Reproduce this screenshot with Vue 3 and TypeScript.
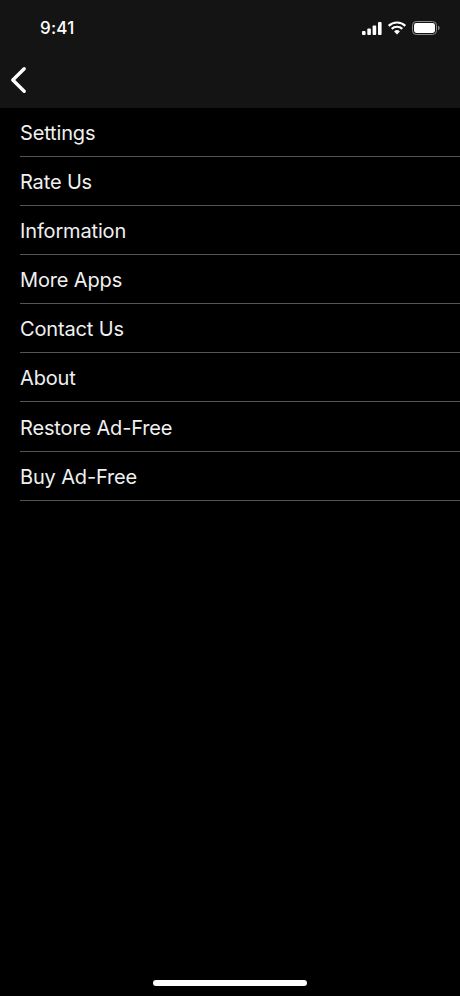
<script setup lang="ts">
const items: string[] = ['Settings', 'Rate Us', 'Information', 'More Apps', 'Contact Us', 'About', 'Restore Ad-Free', 'Buy Ad-Free']
</script>

<template>
  <div class="screen">
    <header class="header">
      <div class="status">
        <span class="time">9:41</span>
        <div class="indicators">
          <svg class="signal" width="20" height="13" viewBox="0 0 20 13">
            <rect x="0" y="9" width="3.6" height="4" rx="0.9" fill="#fff" />
            <rect x="5.3" y="6.5" width="3.6" height="6.5" rx="0.9" fill="#fff" />
            <rect x="10.6" y="3.5" width="3.6" height="9.5" rx="0.9" fill="#fff" />
            <rect x="16" y="0" width="3.6" height="13" rx="0.9" fill="#fff" />
          </svg>
          <svg class="wifi" width="20" height="14" viewBox="0 0 19 14">
            <path d="M1.2 4.9 A11.8 11.8 0 0 1 17.8 4.9" fill="none" stroke="#fff" stroke-width="2.2" />
            <path d="M4.2 7.9 A7.6 7.6 0 0 1 14.8 7.9" fill="none" stroke="#fff" stroke-width="2.2" />
            <path d="M9.5 13.6 L6.6 10.4 A4.1 4.1 0 0 1 12.4 10.4 Z" fill="#fff" />
          </svg>
          <svg class="battery" width="28" height="14" viewBox="0 0 28 14">
            <rect x="0.5" y="0.5" width="24" height="13" rx="3.8" fill="none" stroke="#8a8a8a" stroke-width="1" />
            <rect x="2" y="2" width="21" height="10" rx="2.4" fill="#fff" />
            <path d="M26 4.8 C27.2 5.2 27.6 6 27.6 7 C27.6 8 27.2 8.8 26 9.2 Z" fill="#8a8a8a" />
          </svg>
        </div>
      </div>
      <div class="nav">
        <svg class="back" width="18" height="28" viewBox="0 0 18 28">
          <path d="M15.2 2.8 L3.8 14 L15.2 25.2" fill="none" stroke="#fff" stroke-width="3.4" stroke-linecap="round" stroke-linejoin="round" />
        </svg>
      </div>
    </header>
    <ul class="list">
      <li v-for="item in items" :key="item" class="row">
        <span class="label">{{ item }}</span>
      </li>
    </ul>
    <div class="home"></div>
  </div>
</template>

<style scoped>
.screen {
  position: relative;
  width: 460px;
  height: 996px;
  overflow: hidden;
  background: #000;
  color: #fff;
  font-family: Inter, "Liberation Sans", sans-serif;
}
.header {
  height: 108px;
  background: #141414;
  box-sizing: border-box;
}
.status {
  height: 56px;
  display: flex;
  align-items: center;
  justify-content: space-between;
  padding: 0 20px 0 40px;
}
.time {
  font-size: 17px;
  font-weight: 500;
  letter-spacing: 0.2px;
}
.indicators {
  display: flex;
  align-items: center;
  gap: 5px;
}
.nav {
  height: 52px;
  display: flex;
  align-items: flex-start;
  padding-left: 9px;
}
.back {
  display: block;
  margin-top: 10px;
}
.list {
  list-style: none;
  margin: 0;
  padding: 0 0 0 20px;
}
.row {
  height: 49.09px;
  box-sizing: border-box;
  padding-top: 2px;
  display: flex;
  align-items: center;
  border-bottom: 1px solid #555;
}
.label {
  font-size: 20px;
  line-height: 1;
  letter-spacing: -0.15px;
  color: #f0f0f0;
}
.home {
  position: absolute;
  left: 152.5px;
  bottom: 10px;
  width: 154px;
  height: 6px;
  border-radius: 3px;
  background: #fff;
}
</style>
